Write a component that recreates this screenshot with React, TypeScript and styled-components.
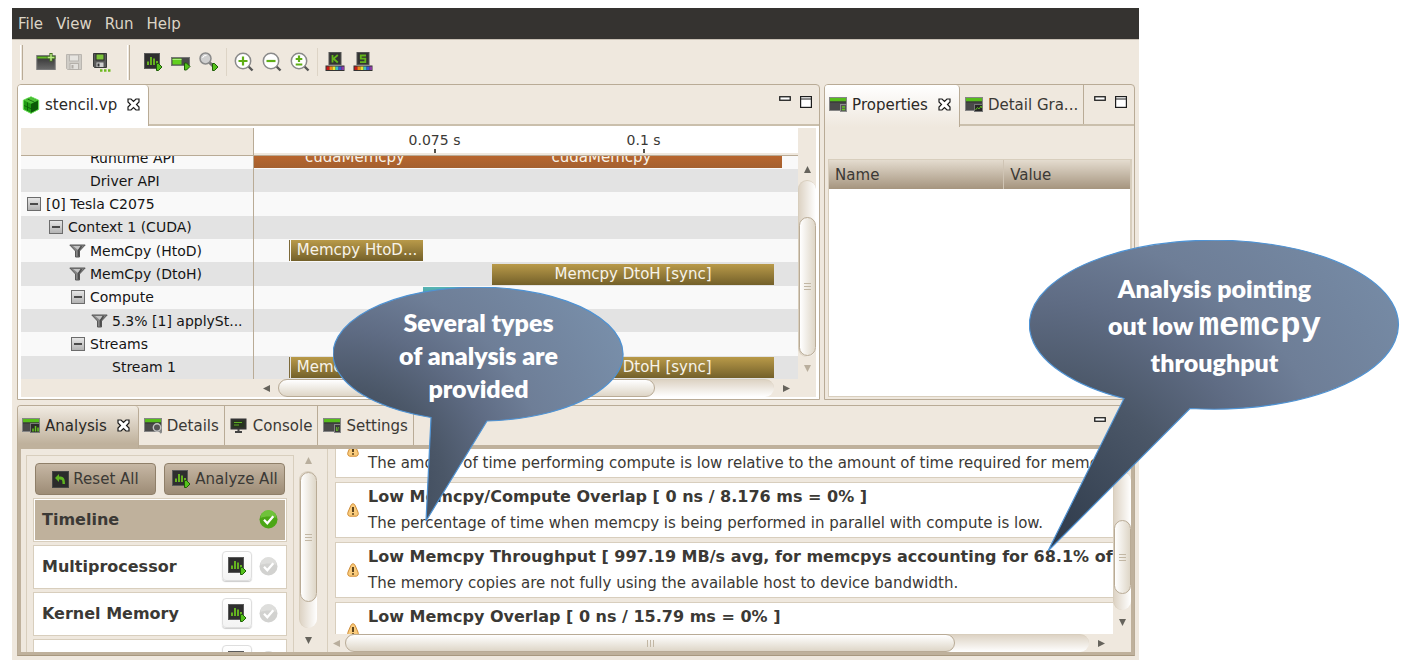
import React from "react";
import styled, { createGlobalStyle, css } from "styled-components";

const sand = "#efe8de";
const line = "#b9ab96";
const soft = "#d8cebd";
const strong = "#bfb19c";
const ink = "#3b3935";

const GlobalStyle = createGlobalStyle`
  * { box-sizing: border-box; }
  body { margin: 0; background: #fff; font-family: "DejaVu Sans", sans-serif; font-size: 15px; color: ${ink}; }
  button { font: inherit; color: inherit; border: 0; background: none; padding: 0; margin: 0; }
  svg { display: block; flex: none; }
  h3, p { margin: 0; }
`;

const Page = styled.div`
  position: relative;
  padding: 8px 272px 9px 12px;
`;

const AppWindow = styled.main`
  background: ${sand};
  padding-bottom: 4px;
`;

const MenuBar = styled.nav`
  display: flex;
  gap: 13px;
  height: 31px;
  align-items: center;
  padding-left: 6px;
  background: #353330;
  color: #dcd5c6;
`;

const Toolbar = styled.div`
  display: flex;
  align-items: center;
  height: 45px;
  padding-left: 8px;
  border-top: 1px solid #c8c0b4;
`;

const ToolGroup = styled.div`
  display: flex;
  padding: 0 11px 0 9px;
`;

const Grip = styled.div`
  width: 3px;
  height: 35px;
  border-left: 1px solid #fff;
  border-right: 1px solid ${line};
`;

const ToolSep = styled.div`
  width: 1px;
  margin: 0 3px;
  background: #ddd4c6;
`;

const ToolButton = styled.button`
  display: flex;
  align-items: center;
  justify-content: center;
  width: 28px;
  height: 28px;
`;

const Workbench = styled.div`
  display: flex;
  flex-direction: column;
  gap: 5px;
  padding: 0 4px 0 5px;
`;

const Split = styled.div`
  display: flex;
  gap: 4px;
`;

const Panel = styled.section<{ $grow?: number; $active?: boolean }>`
  flex: ${(p) => p.$grow ?? 1} 1 0;
  min-width: 0;
  display: flex;
  flex-direction: column;
  border: 1px solid ${line};
  border-radius: 4px 4px 0 0;
  ${(p) => p.$active && css`border-bottom: 1px solid #a8987f;`}
`;

const TabBar = styled.div<{ $active?: boolean }>`
  display: flex;
  height: ${(p) => (p.$active ? 43 : 41)}px;
  border-bottom: ${(p) => (p.$active ? `4px solid ${strong}` : `2px solid #cabfac`)};
`;

const Tab = styled.button<{ $look?: "white" | "fade" | "sand" }>`
  display: flex;
  align-items: center;
  gap: 5px;
  padding: 0 5px;
  border-right: 1px solid ${line};
  white-space: nowrap;
  ${(p) =>
    p.$look &&
    css`
      margin-bottom: -3px;
      padding: 0 8px 3px 4px;
      border-radius: 3px 4px 0 0;
      color: #2b2926;
      background: ${p.$look === "white"
        ? "#fff"
        : p.$look === "fade"
        ? `linear-gradient(#fff, ${sand})`
        : `linear-gradient(#f1ebe2, ${strong} 90%)`};
    `}
`;

const CloseSlot = styled.span`
  margin-left: 5px;
`;

const WindowControls = styled.div`
  display: flex;
  gap: 9px;
  align-items: flex-start;
  margin-left: auto;
  padding: 11px 7px 0;
`;

const TimelineBody = styled.div`
  display: flex;
  flex: 1;
  background: ${sand};
  border: 2px solid #fff;
  border-width: 2px 3px;
`;

const TimelineMain = styled.div`
  flex: 1;
  min-width: 0;
`;

const RulerRow = styled.div`
  display: flex;
  height: 28px;
  border-bottom: 1px solid ${line};
`;

const RulerCorner = styled.div`
  flex: none;
  width: 233px;
  border-right: 1px solid ${line};
`;

const Ruler = styled.div`
  flex: 1;
  display: grid;
  grid-template-columns: 76fr 209fr 209fr 50fr;
  background: #fff;
  border-bottom: 2px solid ${sand};
  font-size: 14px;
`;

const RulerMark = styled.div`
  display: flex;
  flex-direction: column;
  align-items: center;
  justify-content: space-between;
  line-height: 16px;
  padding-top: 4px;
  &:first-child { grid-column: 2; }
  &::after { content: ""; width: 2px; height: 4px; background: #55524c; }
`;

const Rows = styled.div`
  display: grid;
  grid-template-rows: 13px repeat(9, 1fr);
  height: 223px;
`;

const Row = styled.div<{ $alt?: boolean }>`
  display: flex;
  align-items: flex-end;
  min-height: 0;
  overflow: hidden;
  background: ${(p) => (p.$alt ? "#e3e3e3" : "#f9f9f9")};
`;

const RowLabel = styled.div<{ $level: number }>`
  flex: none;
  display: flex;
  align-items: center;
  gap: 5px;
  width: 233px;
  height: 100%;
  min-height: 23px;
  padding-left: ${(p) => 5 + p.$level * 22}px;
  border-right: 1px solid ${line};
  font-size: 14px;
  color: #151515;
  white-space: nowrap;
`;

const IconSlot = styled.span`
  display: flex;
  justify-content: center;
  width: 15px;
`;

const Toggle = styled.button`
  width: 14px;
  height: 14px;
  border: 1px solid #6c6c6c;
  background: linear-gradient(#e6e6e6, #b3b3b3);
  &::after { content: ""; display: block; width: 8px; height: 2px; margin: auto; background: #4a4a4a; }
`;

const Lane = styled.div`
  flex: 1;
  min-width: 0;
  display: flex;
  height: 23px;
  padding: 1px 0;
`;

const laneColor = {
  none: "transparent",
  api: "linear-gradient(#c66a2d, #a4602f)",
  copy: "linear-gradient(#b99a49, #73602a)",
  tick: "#7d6a3a",
  kernel: "linear-gradient(#58b5b5, #2d7f80)",
};

const Segment = styled.div<{ $kind: keyof typeof laneColor }>`
  flex: none;
  height: 21px;
  padding: 0 4px;
  overflow: hidden;
  background: ${(p) => laneColor[p.$kind]};
  ${(p) => (p.$kind === "tick" || p.$kind === "none") && css`padding: 0;`}
  color: #f7f3ea;
  line-height: 21px;
  text-align: center;
  white-space: nowrap;
`;

const ScrollV = styled.div`
  flex: none;
  display: flex;
  flex-direction: column;
  align-items: center;
  width: 18px;
  background: ${sand};
`;

const ScrollH = styled.div`
  display: flex;
  align-items: center;
  height: 18px;
  background: ${sand};
`;

const ArrowBox = styled.button<{ $size: number }>`
  flex: none;
  display: flex;
  align-items: center;
  justify-content: center;
  ${(p) => css`width: ${p.$size}px; height: ${p.$size}px;`}
`;

const TroughV = styled.div<{ $before: number }>`
  flex: 1;
  width: 18px;
  padding-top: ${(p) => p.$before}px;
  border: 1px solid ${soft};
  border-width: 1px 0 0 1px;
  border-radius: 9px;
  background: linear-gradient(90deg, #ddd3c4, #fff);
`;

const TroughH = styled.div`
  flex: 1;
  height: 18px;
  border-top: 1px solid ${soft};
  border-radius: 9px;
  background: linear-gradient(#ddd3c4, #fff);
`;

const ThumbV = styled.div<{ $length: number }>`
  display: flex;
  align-items: center;
  justify-content: center;
  height: ${(p) => p.$length}px;
  border: 1px solid ${line};
  border-radius: 9px;
  background: linear-gradient(90deg, #fff, #ded6c7);
`;

const ThumbH = styled.div<{ $length: number }>`
  display: flex;
  align-items: center;
  justify-content: center;
  width: ${(p) => p.$length}%;
  height: 18px;
  margin-top: -1px;
  border: 1px solid ${line};
  border-radius: 9px;
  background: linear-gradient(#fff, #ded6c7);
`;

const HScrollRow = styled.div<{ $indent: number }>`
  padding-left: ${(p) => p.$indent}px;
`;

const TableFrame = styled.div`
  flex: 1;
  margin: 33px 2px 2px 3px;
  border: 1px solid ${soft};
  border-right: 2px solid ${soft};
  background: #fff;
`;

const PropTable = styled.table`
  width: 100%;
  border-collapse: collapse;
  table-layout: fixed;
  th {
    height: 29px;
    padding: 0 0 0 6px;
    text-align: left;
    font-weight: normal;
    background: linear-gradient(#e4dccf, #a5947e);
  }
  th:first-child { width: 58%; border-right: 1px solid #cfc4b4; }
`;

const AnalysisBody = styled.div`
  display: flex;
  height: 206px;
  border: 3px solid ${strong};
  border-top: 0;
`;

const StageColumn = styled.div`
  flex: none;
  width: 268px;
  margin: 6px 5px 0;
  padding: 7px 6px 0;
  border: 1px solid ${soft};
  border-bottom: 0;
  overflow: hidden;
`;

const StageButtons = styled.div`
  display: flex;
  gap: 8px;
  padding: 0 2px;
  margin-bottom: 3px;
`;

const BigButton = styled.button`
  flex: 1;
  display: flex;
  align-items: center;
  justify-content: center;
  gap: 4px;
  height: 32px;
  border: 1px solid #8f7f69;
  border-radius: 4px;
  background: linear-gradient(#c6b7a4, #9d8c76);
  white-space: nowrap;
`;

const Stage = styled.div<{ $selected?: boolean }>`
  display: flex;
  align-items: center;
  gap: 7px;
  height: 44px;
  margin-bottom: 3px;
  padding: 0 8px 2px;
  border: 1px solid ${soft};
  background: ${(p) => (p.$selected ? strong : "#fff")};
  box-shadow: ${(p) => (p.$selected ? "inset 0 0 0 1px #fff" : "none")};
  font-size: 16px;
  font-weight: bold;
`;

const StageName = styled.span`
  flex: 1;
`;

const RunStage = styled.button`
  display: flex;
  align-items: center;
  justify-content: center;
  width: 30px;
  height: 30px;
  border: 1px solid #dedede;
  border-radius: 4px;
  background: linear-gradient(#fff, #f3f3f3);
  box-shadow: 0 1px 1px #ccc;
`;

const Results = styled.div`
  flex: 1;
  min-width: 0;
  margin-left: 10px;
  border-left: 1px solid ${soft};
  display: flex;
  flex-direction: column;
`;

const ResultsTop = styled.div`
  display: flex;
  flex: 1;
  min-height: 0;
  padding-left: 7px;
`;

const ResultList = styled.div`
  flex: 1;
  min-width: 0;
  overflow: hidden;
`;

const ResultStack = styled.div`
  display: flex;
  flex-direction: column;
  gap: 4px;
  margin-top: -27px;
`;

const Result = styled.article`
  display: flex;
  align-items: center;
  gap: 9px;
  height: 56px;
  padding-left: 11px;
  border: 1px solid ${soft};
  border-right: 0;
  background: #fff;
  white-space: nowrap;
  line-height: 26px;
  h3 { font-size: 16px; height: 26px; }
`;

const Callout = styled.aside<{ $x: number; $y: number; $w: number; $h: number }>`
  position: absolute;
  left: ${(p) => p.$x}px;
  top: ${(p) => p.$y}px;
  width: ${(p) => p.$w}px;
  height: ${(p) => p.$h}px;
`;

const CalloutText = styled.p<{ $top: number; $line: number }>`
  position: absolute;
  top: ${(p) => p.$top}px;
  left: 0;
  right: 0;
  font: 800 25px/${(p) => p.$line}px Lato, sans-serif;
  color: #fff;
  text-align: center;
  code { font: bold 34px/24px "Liberation Mono", monospace; }
`;

/* ---------- icons ---------- */

const Svg = (p: { w?: number; h?: number; vb?: string; children: React.ReactNode }) => (
  <svg width={p.w ?? 20} height={p.h ?? 20} viewBox={p.vb ?? `0 0 ${p.w ?? 20} ${p.h ?? 20}`} aria-hidden="true">
    {p.children}
  </svg>
);

const Play = ({ x, y }: { x: number; y: number }) => (
  <path d={`M${x} ${y}h2l3.5 3.5-3.5 3.5h-2z`} fill="#55c21c" stroke="#1d5c06" />
);

const ChartIcon = () => (
  <Svg>
    <rect x="1.500" y="1.500" width="15" height="15" fill="#2e2e2e" stroke="#5a5a5a" />
    <path d="M5 13V9.500M8 13V5M11 13V6.500M14 13V9" stroke="#6cc11f" strokeWidth="1.800" />
    <Play x={13.5} y={11.5} />
  </Svg>
);

const NewIcon = () => (
  <Svg>
    <defs>
      <linearGradient id="folder" x2="0" y2="1">
        <stop offset="0" stopColor="#2f2f2f" />
        <stop offset="1" stopColor="#6a6a6a" />
      </linearGradient>
    </defs>
    <rect x=".8" y="3.500" width="18.400" height="14" fill="url(#folder)" stroke="#7a7a7a" />
    <path d="M1.300 5.500h12" stroke="#62bd25" strokeWidth="2" />
    <path d="M15 1v8.500M10.800 5.500h8.600" stroke="#456f22" strokeWidth="3.200" />
    <path d="M15 2v6.700M11.600 5.500h6.800" stroke="#b9ec84" strokeWidth="1.500" />
  </Svg>
);

const SaveIcon = () => (
  <Svg>
    <path d="M2.500 2.500h15v15h-14l-1-1z" fill="#cfccc6" stroke="#bab6b0" />
    <rect x="5.500" y="3" width="9" height="6" fill="#e6e4e0" stroke="#b9b6b1" />
    <rect x="6" y="11.500" width="8.500" height="6" fill="#e2e0dc" stroke="#b4b0aa" />
    <rect x="7.500" y="13" width="2" height="3.500" fill="#b1ada7" />
  </Svg>
);

const SaveAsIcon = () => (
  <Svg>
    <path d="M1.500 1.500h13v14h-12l-1-1z" fill="#5a5a5a" stroke="#3a3a3a" />
    <rect x="4" y="2" width="8" height="6" fill="#7cc43a" stroke="#2c2c2c" />
    <rect x="4.500" y="10.500" width="7" height="4.500" fill="#cfcfcf" />
    <rect x="5.500" y="11.500" width="2" height="3" fill="#333" />
    <path d="M8 18.500h2.500M12 18.500h2.500M16 18.500h2.500" stroke="#6fb920" strokeWidth="2.400" />
  </Svg>
);

const RunIcon = () => (
  <Svg>
    <rect x=".5" y="5.500" width="18" height="8" fill="#4a4a4a" stroke="#777" />
    <rect x="1.500" y="6.500" width="9" height="6" fill="#62cf1f" />
    <path d="M1.500 7.500h9" stroke="#a9ee78" />
    <Play x={13.5} y={11} />
  </Svg>
);

const SearchRunIcon = () => (
  <Svg>
    <path d="M10.500 10.500l4 4" stroke="#777" strokeWidth="3" />
    <circle cx="6.500" cy="6.500" r="5.500" fill="#cfcfcf" stroke="#8a8a8a" strokeWidth="1.500" />
    <path d="M3.500 6a3.500 3.500 0 0 1 4-2.500" stroke="#fff" fill="none" />
    <Play x={13.5} y={11.5} />
  </Svg>
);

const ZoomIcon = ({ mark }: { mark: string }) => (
  <Svg>
    <path d="M13.500 13.500l5 5" stroke="#575757" strokeWidth="2.400" />
    <circle cx="9" cy="9" r="7.700" fill="#fff" stroke="#8a8a8a" strokeWidth="1.500" />
    <path d={mark} stroke="#5fae16" strokeWidth="2.200" fill="none" />
  </Svg>
);

const SpectrumIcon = ({ glyph }: { glyph: string }) => (
  <Svg>
    <rect x="4" y=".5" width="12" height="12" fill="#333" stroke="#555" />
    <path d={glyph} stroke="#63b51c" strokeWidth="1.800" fill="none" />
    <rect x=".5" y="13.500" width="19" height="5.500" fill="#333" />
    <rect x="1.500" y="14.500" width="3" height="3.500" fill="#c81818" />
    <rect x="4.500" y="14.500" width="3" height="3.500" fill="#f08a1c" />
    <rect x="7.500" y="14.500" width="3" height="3.500" fill="#e9e531" />
    <rect x="10.500" y="14.500" width="3" height="3.500" fill="#3ec3b8" />
    <rect x="13.500" y="14.500" width="3" height="3.500" fill="#3a55d0" />
    <rect x="16.500" y="14.500" width="2.500" height="3.500" fill="#8b3ba5" />
  </Svg>
);

const CubeIcon = () => (
  <Svg w={18} h={18}>
    <path d="M9 .8l7.700 3.400v9.200L9 17.400 1.300 13.400V4.200z" fill="#1f9a14" stroke="#6fe05c" />
    <path d="M2 4.500l7-3.100 7 3.100-7 3.300z" fill="#4cc036" />
    <path d="M9 8l7-3.300v8.400L9 16.700z" fill="#0c5a08" />
    <path d="M5.500 6.500v8M2 9.500l7 3.200 7-3.300M5.500 3l7 3.200M12.500 6.500v8" stroke="#0a5a07" strokeWidth=".8" fill="none" />
  </Svg>
);

const ViewIcon = ({ kind }: { kind: "props" | "graph" | "chart" | "find" | "tools" }) => (
  <Svg w={18} h={17}>
    <rect x=".5" y="1.500" width="17" height="13" fill="#4a4a4a" stroke="#858585" />
    <rect x="1" y="2" width="16" height="3.500" fill="#57bd1c" />
    <path d="M1 6h16" stroke="#333" />
    {kind === "props" && (
      <>
        <rect x="11.500" y="8.500" width="6" height="7" fill="#555" stroke="#8d8d8d" />
        <path d="M13 11h3M13 13.500h3" stroke="#62c91f" strokeWidth="1.400" />
      </>
    )}
    {kind === "graph" && (
      <>
        <rect x="9.500" y="8.500" width="8" height="7" fill="#262626" stroke="#777" />
        <path d="M10.500 14l2-2.500 1.500 1.500 2-3 1 2" stroke="#5cbb1d" fill="none" />
      </>
    )}
    {kind === "chart" && (
      <>
        <rect x="8.500" y="6.500" width="9" height="9" fill="#2b2b2b" stroke="#777" />
        <path d="M11 14.500v-3M13.500 14.500V9M16 14.500v-4" stroke="#66c71f" strokeWidth="1.500" />
      </>
    )}
    {kind === "find" && (
      <>
        <path d="M15 13l2.500 3" stroke="#8a8a8a" strokeWidth="2" />
        <circle cx="13" cy="10.500" r="3.700" fill="#555" stroke="#c4c4c4" strokeWidth="1.400" />
      </>
    )}
    {kind === "tools" && (
      <>
        <rect x="11.500" y="7.500" width="6" height="8" fill="#3c3c3c" stroke="#888" />
        <path d="M13.500 14v-4M15.500 10l-1 4" stroke="#61ad2c" />
      </>
    )}
  </Svg>
);

const ConsoleIcon = () => (
  <Svg w={18} h={17}>
    <rect x="1.500" y="2.500" width="14" height="9" fill="#26331f" stroke="#333" strokeWidth="2" />
    <path d="M4 5.500h8M4 8h5" stroke="#5fae24" />
    <path d="M8.500 12v2M5 15h7" stroke="#444" strokeWidth="2" />
  </Svg>
);

const CloseIcon = () => (
  <Svg w={13} h={13}>
    <path
      d="M1 1h3l2.500 2.500L9 1h3v3L9.500 6.500 12 9v3H9L6.500 9.500 4 12H1V9l2.500-2.500L1 4z"
      fill="#fff"
      stroke="#1a1a1a"
      strokeWidth="1.200"
    />
  </Svg>
);

const MinIcon = () => (
  <Svg w={12} h={5}>
    <rect x=".75" y=".75" width="10.500" height="3.500" fill="#fff" stroke="#1d1d1d" strokeWidth="1.300" />
  </Svg>
);

const MaxIcon = () => (
  <Svg w={12} h={12}>
    <rect x=".6" y=".6" width="10.800" height="10.800" fill="#fff" stroke="#1d1d1d" strokeWidth="1.200" />
    <path d="M1 3h10" stroke="#1d1d1d" />
  </Svg>
);

const FunnelIcon = () => (
  <Svg w={17} h={14}>
    <path d="M.8 1h15.400L10.500 7v6H6.500V7z" fill="#858585" stroke="#565656" />
    <path d="M4 2h8.500L9 6z" fill="#c4c4c4" />
    <path d="M12.500 2L9.500 6.500v6" stroke="#4d4d4d" strokeWidth="1.600" fill="none" />
  </Svg>
);

const ResetIcon = () => (
  <Svg w={17} h={17}>
    <rect x=".5" y=".5" width="16" height="16" fill="#2b2b2b" stroke="#454545" />
    <path d="M3 7l4-4v2.500c4.500 0 6 1.500 6 7.500h-2.500c0-4-.5-4.500-3.500-4.500V11z" fill="#5fb321" />
  </Svg>
);

const CheckIcon = ({ done }: { done?: boolean }) => (
  <Svg w={19} h={19}>
    <circle cx="9.500" cy="9.500" r="9" fill={done ? "#4ba616" : "#d2d2d0"} />
    <path d="M1.500 8a8 8 0 0 1 16 0c-5-2-11-2-16 0z" fill={done ? "#6fc23a" : "#dededc"} />
    <path d="M5 9.800l3.300 3.400 6-7" stroke="#fff" strokeWidth="2.300" fill="none" />
  </Svg>
);

const WarnIcon = () => (
  <Svg w={12} h={14}>
    <path d="M6 .8c1.200 0 1.700.8 2.100 1.600l2.900 6.800c.8 2-.2 4-1.800 4H2.800C1.200 13.200.2 11.200 1 9.200l2.900-6.800C4.300 1.600 4.800.8 6 .8z" fill="#f9cb7c" stroke="#cf8a33" />
    <path d="M6 4v5M6 10.200v1.600" stroke="#4a3413" strokeWidth="1.800" />
  </Svg>
);

const Arrow = ({ dir, dim }: { dir: "up" | "down" | "left" | "right"; dim?: boolean }) => {
  const shapes = { up: "M4 0l4 8H0z", down: "M0 0h8L4 8z", left: "M8 0v8L0 4z", right: "M0 0l8 4-8 4z" };
  return (
    <Svg w={7} h={7} vb="0 0 8 8">
      <path d={shapes[dir]} fill={dim ? "#b9ae9d" : "#66635c"} />
    </Svg>
  );
};

const ThumbGrip = ({ vertical }: { vertical?: boolean }) => (
  <Svg w={9} h={9}>
    <path d={vertical ? "M1 1.500h7M1 4.500h7M1 7.500h7" : "M1.500 1v7M4.500 1v7M7.500 1v7"} stroke="#c2b7a4" />
  </Svg>
);

/* ---------- data ---------- */

type Seg = { from: number; to: number; kind: keyof typeof laneColor; label?: string };
type TreeRow = { label: string; level: number; icon?: "toggle" | "filter"; segs?: Seg[] };

const laneStart = 254;
const laneWidth = 544;

const treeRows: TreeRow[] = [
  {
    label: "Runtime API",
    level: 2,
    segs: [
      { from: 254, to: 289, kind: "api" },
      { from: 289, to: 421, kind: "api", label: "cudaMemcpy" },
      { from: 421, to: 782, kind: "api", label: "cudaMemcpy" },
    ],
  },
  { label: "Driver API", level: 2 },
  { label: "[0] Tesla C2075", level: 0, icon: "toggle" },
  { label: "Context 1 (CUDA)", level: 1, icon: "toggle" },
  {
    label: "MemCpy (HtoD)",
    level: 2,
    icon: "filter",
    segs: [
      { from: 289, to: 290, kind: "tick" },
      { from: 291, to: 423, kind: "copy", label: "Memcpy HtoD..." },
    ],
  },
  {
    label: "MemCpy (DtoH)",
    level: 2,
    icon: "filter",
    segs: [{ from: 492, to: 774, kind: "copy", label: "Memcpy DtoH [sync]" }],
  },
  { label: "Compute", level: 2, icon: "toggle", segs: [{ from: 423, to: 492, kind: "kernel" }] },
  { label: "5.3% [1] applySt...", level: 3, icon: "filter" },
  { label: "Streams", level: 2, icon: "toggle" },
  {
    label: "Stream 1",
    level: 3,
    segs: [
      { from: 289, to: 290, kind: "tick" },
      { from: 291, to: 423, kind: "copy", label: "Memcpy HtoD..." },
      { from: 492, to: 774, kind: "copy", label: "Memcpy DtoH [sync]" },
    ],
  },
];

const results = [
  { title: "", text: "The amount of time performing compute is low relative to the amount of time required for memcpy." },
  {
    title: "Low Memcpy/Compute Overlap [ 0 ns / 8.176 ms = 0% ]",
    text: "The percentage of time when memcpy is being performed in parallel with compute is low.",
  },
  {
    title: "Low Memcpy Throughput [ 997.19 MB/s avg, for memcpys accounting for 68.1% of a",
    text: "The memory copies are not fully using the available host to device bandwidth.",
  },
  { title: "Low Memcpy Overlap [ 0 ns / 15.79 ms = 0% ]", text: "" },
];

const LaneSegments = ({ segs }: { segs: Seg[] }) => {
  let cursor = laneStart;
  return (
    <>
      {segs.map((s, i) => {
        const gap = s.from - cursor;
        cursor = s.to;
        return (
          <Segment
            key={i}
            $kind={s.kind}
            style={{
              width: `${((s.to - s.from) / laneWidth) * 100}%`,
              marginLeft: `${(gap / laneWidth) * 100}%`,
            }}
          >
            {s.label}
          </Segment>
        );
      })}
    </>
  );
};

const Shades = ({ id, cy }: { id: string; cy: number }) => (
  <radialGradient id={id} gradientUnits="userSpaceOnUse" cx="0" cy={cy} r={cy * 1.55}>
    <stop offset="0" stopColor="#2b3747" />
    <stop offset=".35" stopColor="#4b5768" />
    <stop offset=".52" stopColor="#5f6c84" />
    <stop offset=".67" stopColor="#6e7e97" />
    <stop offset="1" stopColor="#788ea9" />
  </radialGradient>
);

export default function App() {
  return (
    <Page>
      <GlobalStyle />
      <AppWindow>
        <MenuBar>
          <button>File</button>
          <button>View</button>
          <button>Run</button>
          <button>Help</button>
        </MenuBar>
        <Toolbar>
          <Grip />
          <ToolGroup>
            <ToolButton aria-label="New session"><NewIcon /></ToolButton>
            <ToolButton aria-label="Save"><SaveIcon /></ToolButton>
            <ToolButton aria-label="Save as"><SaveAsIcon /></ToolButton>
          </ToolGroup>
          <Grip />
          <ToolGroup>
            <ToolButton aria-label="Analyze"><ChartIcon /></ToolButton>
            <ToolButton aria-label="Run"><RunIcon /></ToolButton>
            <ToolButton aria-label="Find and run"><SearchRunIcon /></ToolButton>
            <ToolSep />
            <ToolButton aria-label="Zoom in"><ZoomIcon mark="M9 4.500v9M4.500 9h9" /></ToolButton>
            <ToolButton aria-label="Zoom out"><ZoomIcon mark="M4.500 9h9" /></ToolButton>
            <ToolButton aria-label="Zoom to fit"><ZoomIcon mark="M9 3.500v6.500M5.700 7h6.600M5.700 12.500h6.600" /></ToolButton>
            <ToolSep />
            <ToolButton aria-label="Color by kernel"><SpectrumIcon glyph="M7.500 3v7.500M12.800 3L8.500 6.800l4.300 3.700" /></ToolButton>
            <ToolButton aria-label="Color by stream"><SpectrumIcon glyph="M13 3.500H7.800v3.200h4.500v3.500H7" /></ToolButton>
          </ToolGroup>
        </Toolbar>
        <Workbench>
          <Split>
            <Panel $grow={804}>
              <TabBar>
                <Tab $look="white">
                  <CubeIcon />
                  stencil.vp
                  <CloseSlot><CloseIcon /></CloseSlot>
                </Tab>
                <WindowControls>
                  <button aria-label="Minimize"><MinIcon /></button>
                  <button aria-label="Maximize"><MaxIcon /></button>
                </WindowControls>
              </TabBar>
              <TimelineBody>
                <TimelineMain>
                  <RulerRow>
                    <RulerCorner />
                    <Ruler>
                      <RulerMark>0.075 s</RulerMark>
                      <RulerMark>0.1 s</RulerMark>
                    </Ruler>
                  </RulerRow>
                  <Rows>
                    {treeRows.map((r, i) => (
                      <Row key={r.label} $alt={i % 2 === 1}>
                        <RowLabel $level={r.level}>
                          <IconSlot>
                            {r.icon === "toggle" && <Toggle aria-label={`Collapse ${r.label}`} />}
                            {r.icon === "filter" && <FunnelIcon />}
                          </IconSlot>
                          {r.label}
                        </RowLabel>
                        <Lane>{r.segs && <LaneSegments segs={r.segs} />}</Lane>
                      </Row>
                    ))}
                  </Rows>
                  <HScrollRow $indent={233}>
                    <ScrollH>
                      <ArrowBox $size={24}><Arrow dir="left" /></ArrowBox>
                      <TroughH><ThumbH $length={76} /></TroughH>
                      <ArrowBox $size={24}><Arrow dir="right" /></ArrowBox>
                    </ScrollH>
                  </HScrollRow>
                </TimelineMain>
                <ScrollV>
                  <ArrowBox $size={30} as="span" />
                  <ArrowBox $size={22}><Arrow dir="up" /></ArrowBox>
                  <TroughV $before={36}><ThumbV $length={139}><ThumbGrip vertical /></ThumbV></TroughV>
                  <ArrowBox $size={22}><Arrow dir="down" dim /></ArrowBox>
                  <ArrowBox $size={18} as="span" />
                </ScrollV>
              </TimelineBody>
            </Panel>
            <Panel $grow={310}>
              <TabBar>
                <Tab $look="fade">
                  <ViewIcon kind="props" />
                  Properties
                  <CloseSlot><CloseIcon /></CloseSlot>
                </Tab>
                <Tab>
                  <ViewIcon kind="graph" />
                  Detail Gra...
                </Tab>
                <WindowControls>
                  <button aria-label="Minimize"><MinIcon /></button>
                  <button aria-label="Maximize"><MaxIcon /></button>
                </WindowControls>
              </TabBar>
              <TableFrame>
                <PropTable>
                  <thead>
                    <tr>
                      <th>Name</th>
                      <th>Value</th>
                    </tr>
                  </thead>
                </PropTable>
              </TableFrame>
            </Panel>
          </Split>
          <Panel $active>
            <TabBar $active>
              <Tab $look="sand">
                <ViewIcon kind="chart" />
                Analysis
                <CloseSlot><CloseIcon /></CloseSlot>
              </Tab>
              <Tab><ViewIcon kind="find" />Details</Tab>
              <Tab><ConsoleIcon />Console</Tab>
              <Tab><ViewIcon kind="tools" />Settings</Tab>
              <WindowControls>
                <button aria-label="Minimize"><MinIcon /></button>
                <ArrowBox $size={12} as="span" />
              </WindowControls>
            </TabBar>
            <AnalysisBody>
              <StageColumn>
                <StageButtons>
                  <BigButton><ResetIcon />Reset All</BigButton>
                  <BigButton><ChartIcon />Analyze All</BigButton>
                </StageButtons>
                <Stage $selected>
                  <StageName>Timeline</StageName>
                  <CheckIcon done />
                </Stage>
                <Stage>
                  <StageName>Multiprocessor</StageName>
                  <RunStage aria-label="Analyze multiprocessor"><ChartIcon /></RunStage>
                  <CheckIcon />
                </Stage>
                <Stage>
                  <StageName>Kernel Memory</StageName>
                  <RunStage aria-label="Analyze kernel memory"><ChartIcon /></RunStage>
                  <CheckIcon />
                </Stage>
                <Stage>
                  <StageName />
                  <RunStage aria-label="Analyze next stage"><ChartIcon /></RunStage>
                  <CheckIcon />
                </Stage>
              </StageColumn>
              <ScrollV>
                <ArrowBox $size={22}><Arrow dir="up" dim /></ArrowBox>
                <TroughV $before={0}><ThumbV $length={130}><ThumbGrip vertical /></ThumbV></TroughV>
                <ArrowBox $size={24}><Arrow dir="down" /></ArrowBox>
              </ScrollV>
              <Results>
                <ResultsTop>
                  <ResultList>
                    <ResultStack>
                      {results.map((r) => (
                        <Result key={r.title}>
                          <WarnIcon />
                          <div>
                            <h3>{r.title}</h3>
                            <p>{r.text || "\u00a0"}</p>
                          </div>
                        </Result>
                      ))}
                    </ResultStack>
                  </ResultList>
                  <ScrollV>
                    <ArrowBox $size={22}><Arrow dir="up" /></ArrowBox>
                    <TroughV $before={48}><ThumbV $length={74}><ThumbGrip vertical /></ThumbV></TroughV>
                    <ArrowBox $size={24}><Arrow dir="down" /></ArrowBox>
                  </ScrollV>
                </ResultsTop>
                <ScrollH>
                  <ArrowBox $size={17}><Arrow dir="left" dim /></ArrowBox>
                  <TroughH><ThumbH $length={82}><ThumbGrip /></ThumbH></TroughH>
                  <ArrowBox $size={24}><Arrow dir="right" /></ArrowBox>
                  <ArrowBox $size={18} as="span" />
                </ScrollH>
              </Results>
            </AnalysisBody>
          </Panel>
        </Workbench>
      </AppWindow>

      <Callout $x={333} $y={287} $w={291} $h={236}>
        <Svg w={291} h={236}>
          <defs><Shades id="shade-types" cy={210} /></defs>
          <path
            d="M98 130.500A145 67 0 1 1 154 134L93 234Z"
            fill="url(#shade-types)"
            stroke="#4f93d4"
            strokeWidth="1.200"
          />
        </Svg>
        <CalloutText $top={19} $line={33}>
          Several types
          <br />
          of analysis are
          <br />
          provided
        </CalloutText>
      </Callout>

      <Callout $x={1029} $y={240} $w={371} $h={313}>
        <Svg w={371} h={313}>
          <defs><Shades id="shade-pointer" cy={311} /></defs>
          <path
            d="M95 158.500A184.500 84.500 0 1 1 161 168.500L19 311Z"
            fill="url(#shade-pointer)"
            stroke="#4f93d4"
            strokeWidth="1.200"
          />
        </Svg>
        <CalloutText $top={30} $line={37}>
          Analysis pointing
          <br />
          out low <code>memcpy</code>
          <br />
          throughput
        </CalloutText>
      </Callout>
    </Page>
  );
}
